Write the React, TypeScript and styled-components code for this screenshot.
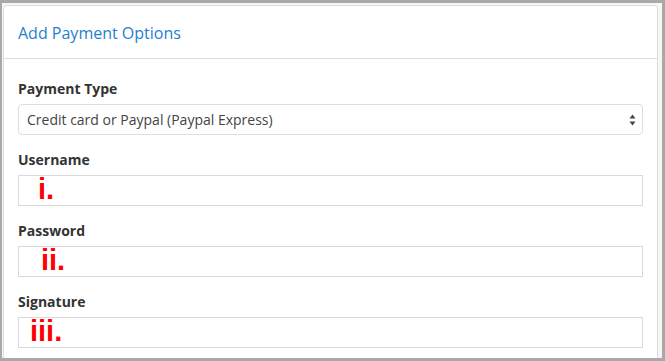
import React from "react";
import styled, { createGlobalStyle } from "styled-components";

const GlobalStyle = createGlobalStyle`
  html, body {
    margin: 0;
    padding: 0;
    background: #a9a9a9;
    width: 665px;
    height: 361px;
    overflow: hidden;
  }
`;

const Frame = styled.div`
  margin: 3px 0 0 2px;
  width: 660px;
  height: 355px;
  background: #f6f6f6;
  overflow: hidden;
`;

const Panel = styled.section`
  margin: 2px 0 0 1px;
  width: 655px;
  height: 400px;
  box-sizing: border-box;
  background: #fff;
  border: 1px solid #dddddd;
  border-radius: 4px 4px 0 0;
  font-family: "Open Sans", "Liberation Sans", sans-serif;
`;

const Header = styled.header`
  padding: 15px 14px 13px;
  border-bottom: 1px solid #dddddd;
`;

const Title = styled.h3`
  margin: 0;
  font-size: 16px;
  line-height: 24px;
  font-weight: 400;
  color: #1f80d2;
`;

const Body = styled.div`
  padding: 20px 14px;
`;

const Group = styled.div`
  margin-bottom: 15px;
`;

const Label = styled.label`
  display: block;
  margin-bottom: 5px;
  font-size: 14px;
  line-height: 20px;
  font-weight: 700;
  color: #333333;
`;

const SelectBox = styled.div`
  display: flex;
  align-items: center;
  justify-content: space-between;
  height: 31px;
  box-sizing: border-box;
  border: 1px solid #dedede;
  border-radius: 4px;
  padding: 0 6px 0 8px;
  font-size: 14px;
  color: #444444;
`;

const Arrows = styled.svg`
  width: 7px;
  height: 12px;
  display: block;
`;

const Field = styled.div<{ $indent: number }>`
  height: 31px;
  box-sizing: border-box;
  border: 1px solid #d9d9d9;
  padding-left: ${(p) => p.$indent}px;
  font-family: "Liberation Sans", Arial, sans-serif;
  font-weight: 700;
  font-size: 29px;
  line-height: 27px;
  color: #ff0000;
  overflow: visible;
  white-space: nowrap;
`;

const fields = [
  { label: "Username", mark: "i.", indent: 19 },
  { label: "Password", mark: "ii.", indent: 22 },
  { label: "Signature", mark: "iii.", indent: 11 },
];

export default function App() {
  return (
    <>
      <GlobalStyle />
      <Frame>
        <Panel>
          <Header>
            <Title>Add Payment Options</Title>
          </Header>
          <Body>
            <Group>
              <Label>Payment Type</Label>
              <SelectBox>
                <span>Credit card or Paypal (Paypal Express)</span>
                <Arrows viewBox="0 0 7 12">
                  <path d="M3.5 0.5 L6.5 4.5 L0.5 4.5 Z" fill="#444" />
                  <path d="M0.5 7.5 L6.5 7.5 L3.5 11.5 Z" fill="#444" />
                </Arrows>
              </SelectBox>
            </Group>
            {fields.map((f) => (
              <Group key={f.label}>
                <Label>{f.label}</Label>
                <Field $indent={f.indent}>{f.mark}</Field>
              </Group>
            ))}
          </Body>
        </Panel>
      </Frame>
    </>
  );
}
